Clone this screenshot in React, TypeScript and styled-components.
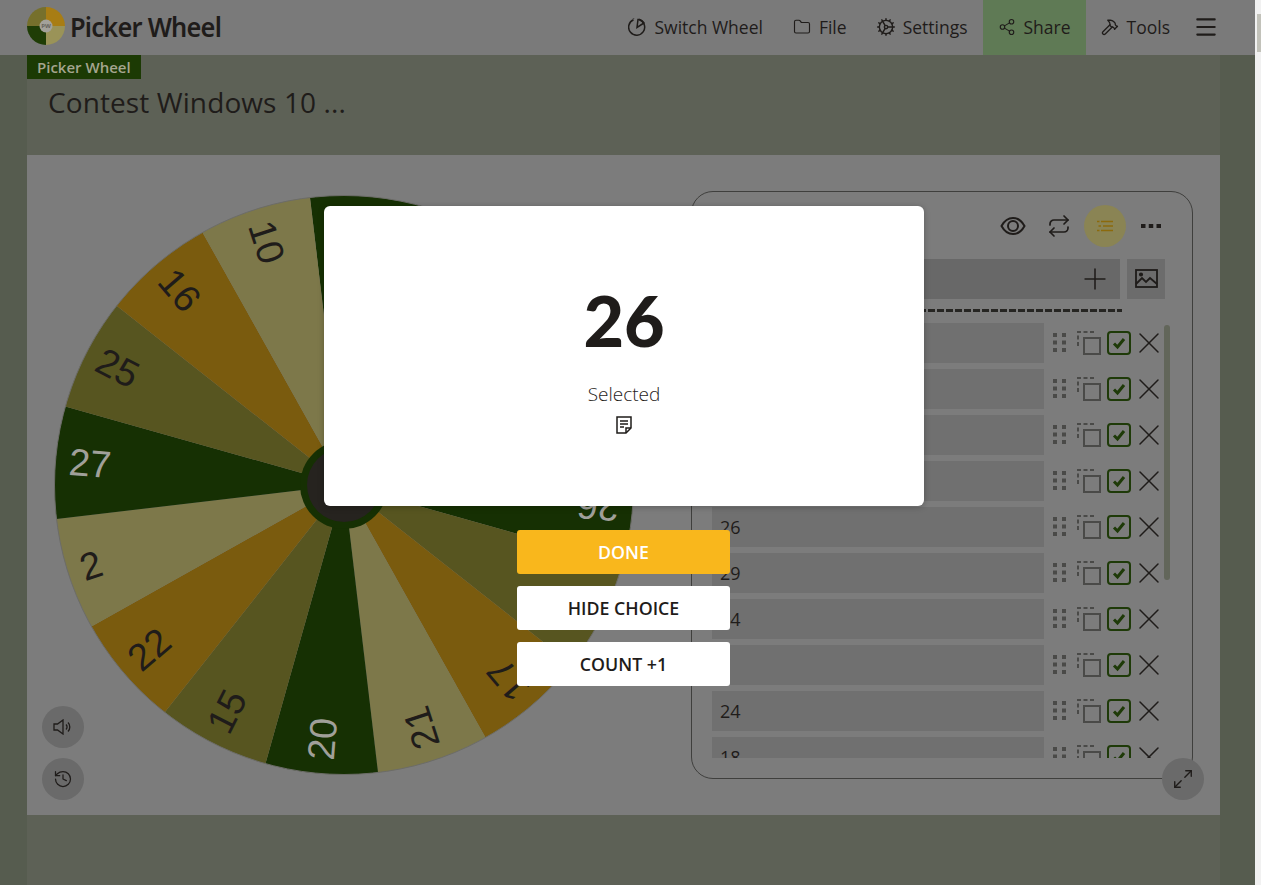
import styled, { createGlobalStyle } from 'styled-components';
import { Cog, Folder, Hammer, History, Maximize2, Menu, Plus, Repeat, Share2, X } from 'lucide-react';

const GlobalStyle = createGlobalStyle`
  html, body {
    margin: 0;
    height: 100%;
    overflow: hidden;
  }
  body {
    font-family: "Open Sans", "Noto Sans", sans-serif;
    color: #1f1c1a;
  }
`;

const CX = 290;
const CY = 290;
const R = 289.5;

const DARK = '#163003';
const OLIVE = '#575520';
const ORANGE = '#7a5b0e';
const TAN = '#7d784a';
const LIGHT_TEXT = '#a0a09a';
const DARK_TEXT = '#1f1c1a';

const slices = [
  { label: '29', fill: DARK, text: LIGHT_TEXT },
  { label: '14', fill: OLIVE, text: DARK_TEXT },
  { label: '7', fill: ORANGE, text: DARK_TEXT },
  { label: '12', fill: TAN, text: DARK_TEXT },
  { label: '26', fill: DARK, text: LIGHT_TEXT },
  { label: '3', fill: OLIVE, text: DARK_TEXT },
  { label: '17', fill: ORANGE, text: DARK_TEXT },
  { label: '21', fill: TAN, text: DARK_TEXT },
  { label: '20', fill: DARK, text: LIGHT_TEXT },
  { label: '15', fill: OLIVE, text: DARK_TEXT },
  { label: '22', fill: ORANGE, text: DARK_TEXT },
  { label: '2', fill: TAN, text: DARK_TEXT },
  { label: '27', fill: DARK, text: LIGHT_TEXT },
  { label: '25', fill: OLIVE, text: DARK_TEXT },
  { label: '16', fill: ORANGE, text: DARK_TEXT },
  { label: '10', fill: TAN, text: DARK_TEXT },
];

const rows = ['10', '16', '25', '27', '26', '29', '14', '7', '24', '18'];

const polar = (deg: number, r: number) => {
  const a = (deg * Math.PI) / 180;
  return [CX + r * Math.sin(a), CY - r * Math.cos(a)];
};

const Wheel = () => (
  <WheelSvg viewBox="0 0 580 580">
    {slices.map((s, i) => {
      const start = -6.75 + i * 22.5;
      const [x1, y1] = polar(start, R);
      const [x2, y2] = polar(start + 22.5, R);
      return (
        <path key={i} d={`M${CX} ${CY} L${x1} ${y1} A${R} ${R} 0 0 1 ${x2} ${y2} Z`} fill={s.fill} />
      );
    })}
    <circle cx={CX} cy={CY} r={R} fill="none" stroke="#6c6c68" strokeWidth="1" />
    {slices.map((s, i) => (
      <WheelLabel
        key={i}
        x={CX - 276}
        y={CY - 1.5}
        dominantBaseline="central"
        fill={s.text}
        transform={`rotate(${4.5 + i * 22.5 + 90} ${CX} ${CY})`}
      >
        {s.label}
      </WheelLabel>
    ))}
    <circle cx={CX} cy={CY} r="44" fill={DARK} />
    <circle cx={CX} cy={CY} r="37" fill="#26231f" />
  </WheelSvg>
);

const Logo = () => (
  <svg width="38" height="38" viewBox="0 0 38 38">
    <path d="M19 19V0A19 19 0 0 0 0 19Z" fill="#76702c" />
    <path d="M19 19V0A19 19 0 0 1 38 19Z" fill="#a87d14" />
    <path d="M19 19H38A19 19 0 0 1 19 38Z" fill="#9a9358" />
    <path d="M19 19H0A19 19 0 0 0 19 38Z" fill="#1f3d06" />
    <circle cx="19" cy="19" r="6.5" fill="#a3a19a" />
    <text x="19" y="21" textAnchor="middle" fontSize="6" fontWeight="700" fill="#66645c">
      PW
    </text>
  </svg>
);

const WheelMenuIcon = () => (
  <svg width="18" height="20" viewBox="0 0 18 20" fill="none" stroke="#1f1c1a" strokeWidth="1.5">
    <path d="M11 2.500A8 8 0 1 1 5.500 2.800" />
    <path d="M5.500 1.500v.5M9 10.500L10 2.500h1.500a8 8 0 0 1 4.500 3.500Z" />
  </svg>
);

const EyeIcon = () => (
  <svg width="26" height="20" viewBox="0 0 26 20" fill="none" stroke="#1f1c1a" strokeWidth="2">
    <path d="M1.5 10C4.5 4.5 8.5 2 13 2s8.500 2.500 11.500 8C21.500 15.500 17.500 18 13 18S4.500 15.500 1.500 10Z" />
    <circle cx="13" cy="10" r="5" />
  </svg>
);

const ListIcon = () => (
  <svg width="16" height="12" viewBox="0 0 16 12" fill="none" stroke="#8c6a0c" strokeWidth="1.500">
    <path d="M4 1.500h12M6 6h10M4 10.500h12" />
    <path d="M0 1.500h2.500M1.500 6H4M0 10.500h2.500" />
  </svg>
);

const DotsIcon = () => (
  <svg width="20" height="6" viewBox="0 0 20 6" fill="#1f1c1a">
    <rect x="0" y="1" width="4.500" height="4" />
    <rect x="7.750" y="1" width="4.500" height="4" />
    <rect x="15.500" y="1" width="4.500" height="4" />
  </svg>
);

const PictureIcon = () => (
  <svg width="23" height="20" viewBox="0 0 23 20" fill="none" stroke="#1f1c1a" strokeWidth="1.800">
    <rect x="1" y="1" width="21" height="17" />
    <path d="M1 15l6-6 4 4 4-4 7 6" />
    <circle cx="6" cy="5.500" r="1.200" fill="#1f1c1a" />
  </svg>
);

const GripIcon = () => (
  <svg width="13" height="20" viewBox="0 0 13 20" fill="#4a4a48">
    {[0, 7.500, 15].map((y) => (
      <g key={y}>
        <rect x="0" y={y} width="4" height="4" />
        <rect x="9" y={y} width="4" height="4" />
      </g>
    ))}
  </svg>
);

const CopyIcon = () => (
  <svg width="24" height="24" viewBox="0 0 24 24" fill="none" stroke="#4a4a48">
    <path d="M1 15V1h16" strokeWidth="2" strokeDasharray="4 2.500" />
    <rect x="7" y="7" width="16" height="16" strokeWidth="2" />
  </svg>
);

const CheckIcon = () => (
  <svg width="24" height="24" viewBox="0 0 24 24" fill="none">
    <rect x="1" y="1" width="22" height="22" rx="3" stroke="#1e3a08" strokeWidth="2" />
    <path d="M7 12.500l3.500 3.500L17 8" stroke="#1e3a08" strokeWidth="3" />
  </svg>
);

const SoundIcon = () => (
  <svg width="20" height="16" viewBox="0 0 20 16" fill="none" stroke="#1f1c1a" strokeWidth="1.300">
    <path d="M1 5h3.500L10 1v14l-5.500-4H1Z" />
    <path d="M13 5.500a3.500 3.500 0 0 1 0 5M15 3.500a6.500 6.500 0 0 1 0 9" />
  </svg>
);

const NoteIcon = () => (
  <svg width="16" height="18" viewBox="0 0 16 18" fill="none" stroke="#1f1c1a" strokeWidth="1.500">
    <path d="M1 1h14v11l-5 5H1Z" />
    <path d="M4 5h8M4 8h8M4 11h4M10 17v-5h5" />
  </svg>
);

const App = () => {
  return (
    <Shell>
      <GlobalStyle />
      <Page>
        <Nav>
          <Brand>
            <Logo />
            <BrandName>Picker Wheel</BrandName>
          </Brand>
          <NavItems>
            <NavItem>
              <WheelMenuIcon />
              Switch Wheel
            </NavItem>
            <NavItem>
              <Folder size={18} strokeWidth={1.5} />
              File
            </NavItem>
            <NavItem>
              <SettingsIcon size={20} strokeWidth={1.7} />
              Settings
            </NavItem>
            <NavItem $active>
              <Share2 size={18} strokeWidth={1.5} />
              Share
            </NavItem>
            <NavItem>
              <Hammer size={18} strokeWidth={1.7} />
              Tools
            </NavItem>
            <MenuButton>
              <Menu size={26} strokeWidth={2} />
            </MenuButton>
          </NavItems>
        </Nav>
        <Content>
          <Intro>
            <Tag>Picker Wheel</Tag>
            <Title>Contest Windows 10 ...</Title>
          </Intro>
          <Card>
            <Wheel />
            <Panel>
              <Toolbar>
                <ToolIcon>
                  <EyeIcon />
                </ToolIcon>
                <ToolIcon>
                  <Repeat size={24} strokeWidth={1.7} />
                </ToolIcon>
                <ToolIcon $highlight>
                  <ListIcon />
                </ToolIcon>
                <ToolIcon>
                  <DotsIcon />
                </ToolIcon>
              </Toolbar>
              <InputRow>
                <AddInput>
                  <Plus size={34} strokeWidth={1.100} />
                </AddInput>
                <ImageButton>
                  <PictureIcon />
                </ImageButton>
              </InputRow>
              <Divider />
              <List>
                {rows.map((row, i) => (
                  <Row key={i}>
                    <RowField>{row}</RowField>
                    <RowIcons>
                      <GripIcon />
                      <CopyIcon />
                      <CheckIcon />
                      <X size={36} strokeWidth={1} />
                    </RowIcons>
                  </Row>
                ))}
              </List>
              <ScrollThumb />
              <ExpandButton>
                <Maximize2 size={22} strokeWidth={1.500} />
              </ExpandButton>
            </Panel>
            <SideButtons>
              <RoundButton>
                <SoundIcon />
              </RoundButton>
              <RoundButton>
                <History size={20} strokeWidth={1.500} />
              </RoundButton>
            </SideButtons>
          </Card>
        </Content>
        <Overlay>
          <Modal>
            <Result>26</Result>
            <Caption>Selected</Caption>
            <NoteIcon />
          </Modal>
          <Actions>
            <ActionButton $primary>DONE</ActionButton>
            <ActionButton>HIDE CHOICE</ActionButton>
            <ActionButton>COUNT +1</ActionButton>
          </Actions>
        </Overlay>
      </Page>
      <Track>
        <Thumb />
      </Track>
    </Shell>
  );
};

const Shell = styled.div`
  display: flex;
  width: 1261px;
  height: 885px;
  overflow: hidden;
`;

const Page = styled.div`
  position: relative;
  flex: 1;
  display: flex;
  flex-direction: column;
  background: #565c4f;
`;

const Track = styled.div`
  width: 6px;
  background: #f1f1f1;
  padding: 14px 0 0 2px;
  box-sizing: border-box;
`;

const Thumb = styled.div`
  height: 38px;
  background: #c2c2ba;
`;

const Nav = styled.header`
  height: 55px;
  flex: none;
  display: flex;
  align-items: center;
  justify-content: space-between;
  padding: 0 28px 0 27px;
  background: #7a7a7a;
`;

const Brand = styled.div`
  display: flex;
  align-items: center;
  gap: 5px;
  padding-bottom: 3px;
`;

const BrandName = styled.span`
  font-family: "Noto Sans", sans-serif;
  font-size: 27px;
  font-weight: 600;
  letter-spacing: -0.8px;
  transform: scaleX(0.94);
  transform-origin: left center;
`;

const NavItems = styled.nav`
  display: flex;
  align-items: stretch;
  height: 55px;
`;

const NavItem = styled.a<{ $active?: boolean }>`
  display: flex;
  align-items: center;
  gap: 8px;
  padding: 0 15px 2px;
  font-size: 17.5px;
  background: ${(p) => (p.$active ? '#5f7a55' : 'transparent')};
`;

const SettingsIcon = styled(Cog)`
  margin: 0 -1px;
`;

const MenuButton = styled.div`
  display: flex;
  align-items: center;
  padding: 0 8px 2px;
`;

const Content = styled.main`
  flex: 1;
  margin: 0 35px 0 27px;
  background: #5d6156;
`;

const Intro = styled.div`
  height: 100px;
`;

const Tag = styled.div`
  display: inline-block;
  height: 24px;
  line-height: 24px;
  padding: 0 10px;
  background: #1c3a04;
  color: #a5a58f;
  font-size: 15px;
  font-weight: 600;
  vertical-align: top;
`;

const Title = styled.h1`
  margin: 0;
  padding: 1px 0 0 21px;
  font-size: 28px;
  line-height: 44px;
  font-weight: 400;
  letter-spacing: 0.1px;
`;

const Card = styled.section`
  position: relative;
  display: flex;
  align-items: flex-start;
  height: 660px;
  padding: 36px 27px 0 27px;
  box-sizing: border-box;
  background: #7c7c7c;
`;

const WheelSvg = styled.svg`
  flex: none;
  width: 580px;
  height: 580px;
  margin-top: 4px;
`;

const WheelLabel = styled.text`
  font-family: "Liberation Sans", sans-serif;
  font-size: 38px;
`;

const Panel = styled.div`
  position: relative;
  box-sizing: border-box;
  width: 502px;
  height: 588px;
  margin-left: 57px;
  padding: 14px 0 0 20px;
  border: 1px solid #3f3f3d;
  border-radius: 22px;
`;

const Toolbar = styled.div`
  display: flex;
  justify-content: flex-end;
  align-items: center;
  height: 40px;
  padding-right: 20px;
`;

const ToolIcon = styled.div<{ $highlight?: boolean }>`
  display: flex;
  align-items: center;
  justify-content: center;
  width: 42px;
  height: 42px;
  margin-left: 4px;
  border-radius: 50%;
  background: ${(p) => (p.$highlight ? '#8a8454' : 'transparent')};
`;

const InputRow = styled.div`
  display: flex;
  gap: 7px;
  margin-top: 13px;
`;

const AddInput = styled.div`
  display: flex;
  align-items: center;
  justify-content: flex-end;
  width: 408px;
  height: 40px;
  padding-right: 8px;
  box-sizing: border-box;
  background: #686868;
`;

const ImageButton = styled.div`
  display: flex;
  align-items: center;
  justify-content: center;
  width: 38px;
  height: 40px;
  background: #6c6c6c;
`;

const Divider = styled.div`
  width: 410px;
  height: 3px;
  margin-top: 10px;
  background: repeating-linear-gradient(90deg, #262522 0 7px, transparent 7px 9px);
`;

const List = styled.div`
  display: flex;
  flex-direction: column;
  gap: 6px;
  height: 435px;
  margin-top: 11px;
  overflow: hidden;
`;

const Row = styled.div`
  display: flex;
  flex: none;
  align-items: center;
  height: 40px;
`;

const RowField = styled.div`
  box-sizing: border-box;
  width: 332px;
  height: 40px;
  padding-left: 8px;
  line-height: 40px;
  font-size: 18px;
  background: #707070;
`;

const RowIcons = styled.div`
  display: flex;
  align-items: center;
  gap: 6px;
  margin-left: 9px;

  svg:first-child {
    margin-right: 5px;
  }
  svg:last-child {
    margin-left: -6px;
  }
`;

const ScrollThumb = styled.div`
  position: absolute;
  left: 472px;
  top: 133px;
  width: 6px;
  height: 255px;
  border-radius: 3px;
  background: #62665a;
`;

const ExpandButton = styled.div`
  position: absolute;
  right: -12px;
  bottom: -22px;
  display: flex;
  align-items: center;
  justify-content: center;
  width: 42px;
  height: 42px;
  border-radius: 50%;
  background: #6a6a6a;
`;

const SideButtons = styled.div`
  position: absolute;
  left: 15px;
  top: 551px;
  display: flex;
  flex-direction: column;
  gap: 10px;
`;

const RoundButton = styled.div`
  display: flex;
  align-items: center;
  justify-content: center;
  width: 42px;
  height: 42px;
  border-radius: 50%;
  background: #6a6a6a;
`;

const Overlay = styled.div`
  position: absolute;
  inset: 0;
  display: flex;
  flex-direction: column;
  align-items: center;
  padding: 206px 7px 0 0;
`;

const Modal = styled.div`
  display: flex;
  flex-direction: column;
  align-items: center;
  width: 600px;
  height: 300px;
  padding-top: 72px;
  box-sizing: border-box;
  border-radius: 6px;
  background: #fff;
  box-shadow: 0 1px 6px rgba(0, 0, 0, 0.25);
`;

const Result = styled.div`
  font-family: Lato, sans-serif;
  font-size: 70px;
  font-weight: 900;
  line-height: 84px;
`;

const Caption = styled.div`
  margin-top: 16px;
  margin-bottom: 6px;
  font-size: 19px;
  font-weight: 300;
  line-height: 32px;
`;

const Actions = styled.div`
  display: flex;
  flex-direction: column;
  gap: 12px;
  margin: 24px 1px 0 0;
`;

const ActionButton = styled.div<{ $primary?: boolean }>`
  width: 213px;
  height: 44px;
  line-height: 44px;
  text-align: center;
  font-size: 17.800px;
  font-weight: 600;
  border-radius: 3px;
  color: ${(p) => (p.$primary ? '#fff' : '#1f1c1a')};
  background: ${(p) => (p.$primary ? '#f9b71c' : '#fff')};
`;

export default App;
